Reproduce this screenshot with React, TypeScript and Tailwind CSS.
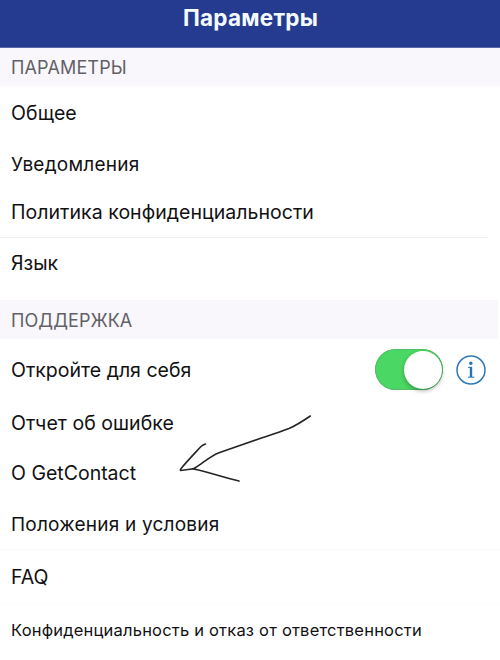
import type { ReactNode } from "react";

function SectionHeader({ title, className }: { title: string; className: string }) {
  return (
    <h2 className={`flex items-center bg-[#f9f7fb] pl-[11px] text-[18px] text-[#626166] ${className}`}>
      <span className="whitespace-nowrap">{title}</span>
    </h2>
  );
}

function Row({ label, className, text = "text-[19px] tracking-[0.22px]", children }: { label: string; className: string; text?: string; children?: ReactNode }) {
  return (
    <li className={`flex shrink-0 items-center pl-[11px] ${className}`}>
      <span className={`whitespace-nowrap ${text}`}>{label}</span>
      {children}
    </li>
  );
}

function Toggle() {
  return (
    <button
      role="switch"
      aria-checked="true"
      className="ml-auto flex h-[41px] w-[68px] items-center justify-end rounded-full bg-[#4bd763] pr-px shadow-[inset_0_0_0_1px_#55bd68]"
    >
      <span className="size-[38px] rounded-full bg-white shadow-[0_2px_4px_rgba(0,0,0,0.3)]" />
    </button>
  );
}

function InfoIcon() {
  return (
    <svg className="mr-3.5 ml-[13px] size-[30px]" viewBox="0 0 30 30" fill="none">
      <circle cx="15" cy="15" r="14" stroke="#2f78b7" strokeWidth="1.5" />
      <circle cx="14.8" cy="8.2" r="1.7" fill="#2672bd" />
      <path d="M12 12.300h4M12 22.200h6.300" stroke="#2672bd" strokeWidth="1" />
      <path d="M15 12v10" stroke="#2672bd" strokeWidth="2.4" />
    </svg>
  );
}

export default function App() {
  return (
    <main className="relative flex h-[660px] w-[500px] flex-col overflow-hidden bg-white font-['Inter','Liberation_Sans',sans-serif] text-[#111113]">
      <header className="flex h-12 shrink-0 items-start justify-center border-b border-[#5a66a7] bg-[#243b8f] pt-1 pl-px">
        <h1 className="text-[22.5px] leading-[28px] font-bold tracking-[0.25px] text-[#f4fbff]">Параметры</h1>
      </header>
      <SectionHeader title="ПАРАМЕТРЫ" className="h-[38px] shrink-0 tracking-[0.15px]" />
      <ul className="flex flex-col">
        <Row label="Общее" className="h-[54px] pt-0.5" text="text-[19.5px] tracking-[0.1px]" />
        <Row label="Уведомления" className="h-12 pt-0.5" />
        <Row label="Политика конфиденциальности" className="h-[49px] pt-px" text="text-[19.5px] tracking-[0.04px]" />
        <li className="mr-3 h-px bg-[#f1f1f2]" />
        <Row label="Язык" className="h-[62px] pb-[10px]" text="text-[19.5px]" />
      </ul>
      <SectionHeader title="ПОДДЕРЖКА" className="mr-[2px] h-[39px] shrink-0 pt-0.5" />
      <ul className="flex flex-col">
        <Row label="Откройте для себя" className="h-[61px]" text="pt-0.5 text-[19.5px]">
          <Toggle />
          <InfoIcon />
        </Row>
        <Row label="Отчет об ошибке" className="h-[45px] pt-0.5" text="text-[19.5px] tracking-[0.04px]" />
        <Row label="О GetContact" className="h-[55px] pt-0.5" text="text-[19.5px]" />
        <Row label="Положения и условия" className="h-[50px] border-b border-[#fbfbfc] pt-0.5" />
        <Row label="FAQ" className="h-[54px] border-b border-[#fdfbfd] pt-0.5" text="text-[19.5px]" />
        <Row label="Конфиденциальность и отказ от ответственности" text="text-[16.5px] tracking-[0.2px]" className="h-[52px]" />
      </ul>
      <svg className="pointer-events-none absolute top-[410px] left-[170px] h-[80px] w-[150px]" viewBox="170 410 150 80" fill="none" stroke="#242326" strokeWidth="1.6" strokeLinecap="round" strokeLinejoin="round">
        <path d="M310.3 416C303 421 296 425.500 289 428.500C280 432 269 435.500 260 438.500L219 452.700C211 455.500 203 463 195 468Q193.500 469 190 469.200L180.500 470.500Q180 469.500 181.500 468C188 460 195 453 201 446.500Q203 444.800 205.500 444M193.500 469C205 471 225 478 239 481" />
      </svg>
    </main>
  );
}
